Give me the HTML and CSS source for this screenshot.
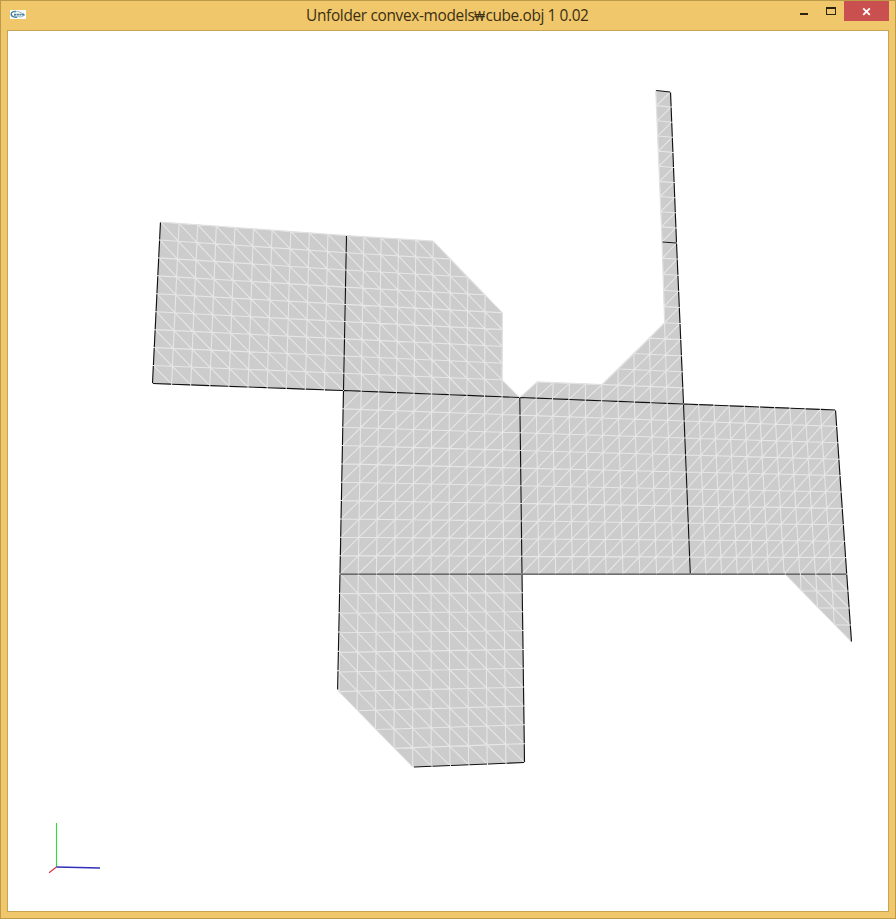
FILE: index.html
```html
<!DOCTYPE html>
<html lang="en">
<head>
<meta charset="utf-8">
<title>Unfolder</title>
<link rel="stylesheet" href="styles.css">
</head>
<body>
<div class="window">
  <header class="titlebar">
    <svg class="app-icon" width="16" height="9" viewBox="0 0 16 9">
      <rect width="16" height="9" fill="#fff"/>
      <path d="M6 1.5C2.5 1 1 3 1.2 4.6S4 7.6 7 7.3" fill="none" stroke="#3d7f99" stroke-width="1.4"/>
      <path d="M4 2.2Q8 .6 11 2.6L15 5Q12 7.8 7 6.8Q4 6.3 4 5" fill="none" stroke="#82afbd" stroke-width=".9"/>
      <path d="M4 4.6h10" stroke="#4a7f97" stroke-width="1.6" stroke-dasharray="2.2 .5"/>
    </svg>
    <h1 class="title"><span>Unfolder convex-models</span><span class="won">₩</span><span class="file">cube.obj 1 0.02</span></h1>
    <div class="controls">
      <svg class="glyph" width="64" height="20" viewBox="0 0 64 20" shape-rendering="crispEdges">
        <rect x="20" y="12" width="8" height="2" fill="#2c2310"/>
        <path d="M46 6h10v8h-10zM47 8v5h8V8z" fill="#2c2310" fill-rule="evenodd"/>
      </svg>
      <div class="close">
        <svg width="45" height="20" viewBox="0 0 45 20"><path d="M19.2 7.3l6.6 6.6m0-6.6l-6.6 6.6" stroke="#fff" stroke-width="1.8"/></svg>
      </div>
    </div>
  </header>
  <main class="viewport">
    <svg id="scene" width="880" height="880" viewBox="8 31 880 880"></svg>
  </main>
</div>
<script src="scene.js"></script>
</body>
</html>
```
FILE: styles.css
```css
* { box-sizing: border-box; }
body { margin: 0; background: #f0c76b; }
.window {
  width: 896px;
  height: 919px;
  border: 1px solid #bd9a49;
  background: #f0c76b;
  padding: 0 6px 6px;
  display: flex;
  flex-direction: column;
}
.titlebar {
  height: 29px;
  display: flex;
  align-items: flex-start;
}
.app-icon { margin: 9px 0 0 3px; width: 16px; flex: none; }
.title {
  margin: 4px auto 0 280px;
  display: flex;
  font: 400 15.4px/22px "Open Sans", "Noto Sans", sans-serif;
  letter-spacing: -0.32px;
  color: #3b2f14;
  white-space: pre;
}
.won {
  width: 11px;
  display: flex;
  justify-content: center;
  font-family: "Liberation Sans", sans-serif;
  font-size: 14px;
  letter-spacing: 0;
  transform: scaleX(.8);
}
.file { letter-spacing: -0.38px; }
.controls { display: flex; height: 20px; }
.glyph { display: block; }
.close { width: 45px; height: 20px; background: #c9504f; }
.close svg { display: block; }
.viewport {
  width: 882px;
  height: 882px;
  border: 1px solid #c6a451;
  background: #fff;
}
#scene { display: block; }
.face { fill: #ccc; }
.mesh { fill: none; stroke: #e6e6e6; stroke-width: 1.1; }
.rim { fill: none; stroke: #e2e2e2; stroke-width: 1; }
.crease { stroke: #111; stroke-width: 1.15; fill: none; }
.base { stroke: #444; stroke-width: 1.4; fill: none; }
```
FILE: scene.js
```js
const scene = document.getElementById("scene");

function add(tag, attrs, parent = scene) {
  const el = document.createElementNS("http://www.w3.org/2000/svg", tag);
  for (const key in attrs) el.setAttribute(key, attrs[key]);
  parent.appendChild(el);
  return el;
}

// Each face: corners (tl, tr, br, bl), grid size, diagonal direction, outline in grid units.
const faces = [
  { q: [[160.5,222],[346.5,235.5],[343.5,390.5],[152.5,383.5]], c: 10, r: 9, d: "\\" },
  { q: [[346.5,235.5],[520,246.5],[519.8,397.5],[343.5,390.5]], c: 10, r: 9, d: "\\",
    o: [[0,0],[5,0],[9,4],[9,8],[10,9],[0,9]] },
  { q: [[343.5,390.5],[519.8,397.5],[522,574],[340,574]], c: 10, r: 10, d: "/" },
  { q: [[519.8,397.5],[683.5,404],[690.3,574],[522,574]], c: 10, r: 10, d: "/" },
  { q: [[683.5,404],[835.5,410],[846.7,574],[690.3,574]], c: 10, r: 10, d: "/" },
  { q: [[340,574],[522,574],[524.5,762.5],[338,770]], c: 10, r: 10, d: "\\",
    o: [[0,0],[10,0],[10,10],[4,10],[0,6]] },
  { q: [[785,574],[846.7,574],[851.5,642],[787,642]], c: 4, r: 4, d: "\\",
    o: [[0,0],[4,0],[4,4]] },
  { q: [[531,234],[676.5,243],[683.5,404],[519.8,397.5]], c: 10, r: 10, d: "/",
    o: [[0,10],[1,9],[5,9],[9,5],[9,0],[10,0],[10,10]] },
  { q: [[655.7,90.5],[670.5,92],[676.5,243],[662,242]], c: 1, r: 10, d: "/" }
];

function at(f, i, j) {
  const u = i / f.c, v = j / f.r, [a, b, c, d] = f.q;
  return [0, 1].map(k =>
    ((1 - v) * ((1 - u) * a[k] + u * b[k]) + v * ((1 - u) * d[k] + u * c[k])).toFixed(2)).join(" ");
}

faces.forEach((f, n) => {
  const outline = f.o || [[0,0],[f.c,0],[f.c,f.r],[0,f.r]];
  const path = "M" + outline.map(([i, j]) => at(f, i, j)).join("L") + "Z";
  add("path", { d: path }, add("clipPath", { id: "face" + n }));
  add("path", { d: path, class: "face" });
  let mesh = "";
  for (let i = 0; i <= f.c; i++) mesh += `M${at(f, i, 0)}L${at(f, i, f.r)}`;
  for (let j = 0; j <= f.r; j++) mesh += `M${at(f, 0, j)}L${at(f, f.c, j)}`;
  for (let i = 0; i < f.c; i++)
    for (let j = 0; j < f.r; j++)
      mesh += f.d === "/" ? `M${at(f, i, j + 1)}L${at(f, i + 1, j)}` : `M${at(f, i, j)}L${at(f, i + 1, j + 1)}`;
  add("path", { d: mesh, class: "mesh", "clip-path": `url(#face${n})` });
  add("path", { d: path, class: "rim" });
});

// Folds and cuts, broken slightly at every mesh vertex.
const edges = [
  [160.5,222,152.5,383.5,9], [346.5,235.5,343.5,390.5,9],
  [152.5,383.5,343.5,390.5,10], [343.5,390.5,519.8,397.5,10],
  [519.8,397.5,683.5,404,10], [683.5,404,835.5,410,10],
  [343.5,390.5,340,574,10], [519.8,397.5,522,574,10],
  [683.5,404,690.3,574,10], [835.5,410,846.7,574,10],
  [846.7,574,851.5,642,4], [340,574,337.6,690,6],
  [522,574,524.5,762.5,10], [413.5,767,524.5,762.5,6],
  [655.7,90.5,670.5,92,1], [662,242,676.5,243,1],
  [670.5,92,676.5,243,10], [676.5,243,683.5,404,10]
];
function broken([x1, y1, x2, y2, n], size = 0.5) {
  const gap = size / (Math.hypot(x2 - x1, y2 - y1) / n);
  let d = "";
  for (let k = 0; k < n; k++) {
    const s = (k + gap) / n, e = (k + 1 - gap) / n;
    d += `M${x1 + (x2 - x1) * s} ${y1 + (y2 - y1) * s}L${x1 + (x2 - x1) * e} ${y1 + (y2 - y1) * e}`;
  }
  return d;
}
add("path", { d: edges.map(e => broken(e)).join(""), class: "crease" });
add("path", {
  d: broken([340,574.1,522,574.1,10], 0.3) + broken([522,574.1,690.3,574.1,10], 0.1)
    + broken([690.3,574.1,785,574.1,6], 0.1) + broken([785,574.1,846.7,574.1,4], 0.5),
  class: "base"
});

// Axis marker
add("path", { d: "M56.5 823V867", stroke: "#35d935", "stroke-width": 1.1 });
add("path", { d: "M56.5 867L49 872.7", stroke: "#d03040", "stroke-width": 1.1 });
add("path", { d: "M56.5 867L100 868", stroke: "#3030b8", "stroke-width": 1.3 });
```
